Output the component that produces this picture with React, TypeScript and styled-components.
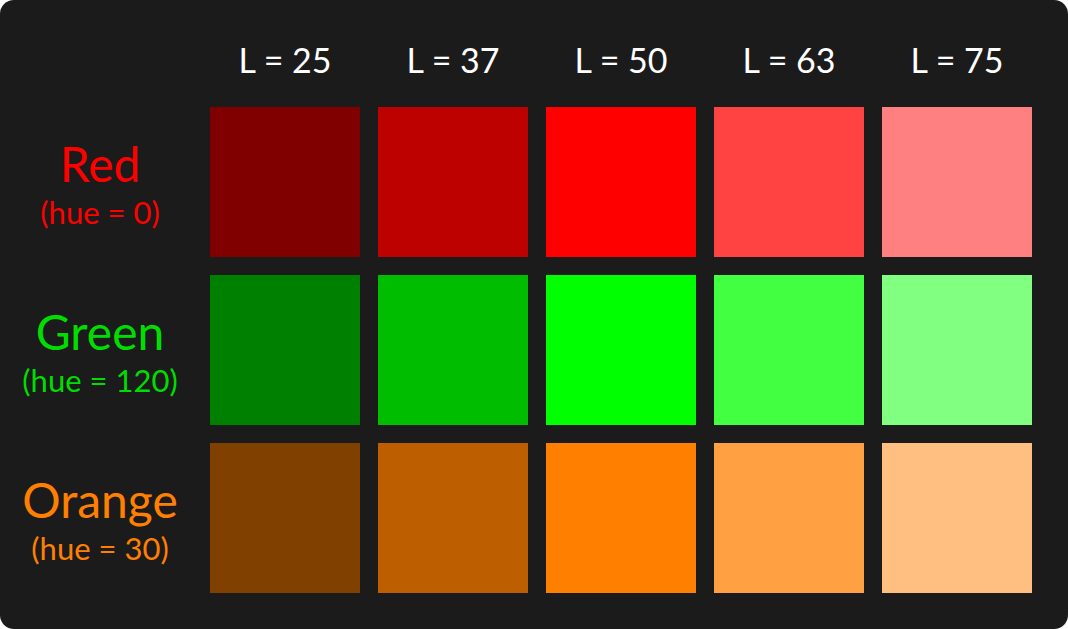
import React from 'react'
import styled, { createGlobalStyle } from 'styled-components'

const GlobalStyle = createGlobalStyle`
  body {
    margin: 0;
    background: #ffffff;
    font-family: Lato, "Open Sans", sans-serif;
  }
`

const Panel = styled.div`
  width: 1068px;
  height: 629px;
  box-sizing: border-box;
  background: #1b1b1b;
  border-radius: 14px;
  padding-top: 30px;
  display: grid;
  grid-template-columns: 192px repeat(5, 150px);
  grid-template-rows: 59px repeat(3, 150px);
  column-gap: 18px;
  row-gap: 18px;
`

const Header = styled.div`
  color: #ffffff;
  font-size: 34px;
  display: flex;
  align-items: center;
  justify-content: center;
`

const Label = styled.div<{ $color: string }>`
  color: ${p => p.$color};
  padding-left: 8px;
  padding-top: 4px;
  display: flex;
  flex-direction: column;
  align-items: center;
  justify-content: center;
  text-align: center;
`

const Name = styled.div`
  font-size: 48px;
  line-height: 52px;
`

const Hue = styled.div`
  font-size: 31px;
  line-height: 36px;
  margin-top: 4px;
`

const Swatch = styled.div<{ $hue: number; $light: number }>`
  background: hsl(${p => p.$hue}, 100%, ${p => p.$light}%);
`

const lightness = [25, 37, 50, 63, 75]

const hues = [
  { name: 'Red', hue: 0, color: '#ff0000' },
  { name: 'Green', hue: 120, color: '#00dd00' },
  { name: 'Orange', hue: 30, color: '#ff8000' }
]

const App = () => (
  <>
    <GlobalStyle />
    <Panel>
      <div />
      {lightness.map(l => (
        <Header key={l}>L = {l}</Header>
      ))}
      {hues.map(h => (
        <React.Fragment key={h.name}>
          <Label $color={h.color}>
            <Name>{h.name}</Name>
            <Hue>(hue = {h.hue})</Hue>
          </Label>
          {lightness.map(l => (
            <Swatch key={l} $hue={h.hue} $light={l} />
          ))}
        </React.Fragment>
      ))}
    </Panel>
  </>
)

export default App
